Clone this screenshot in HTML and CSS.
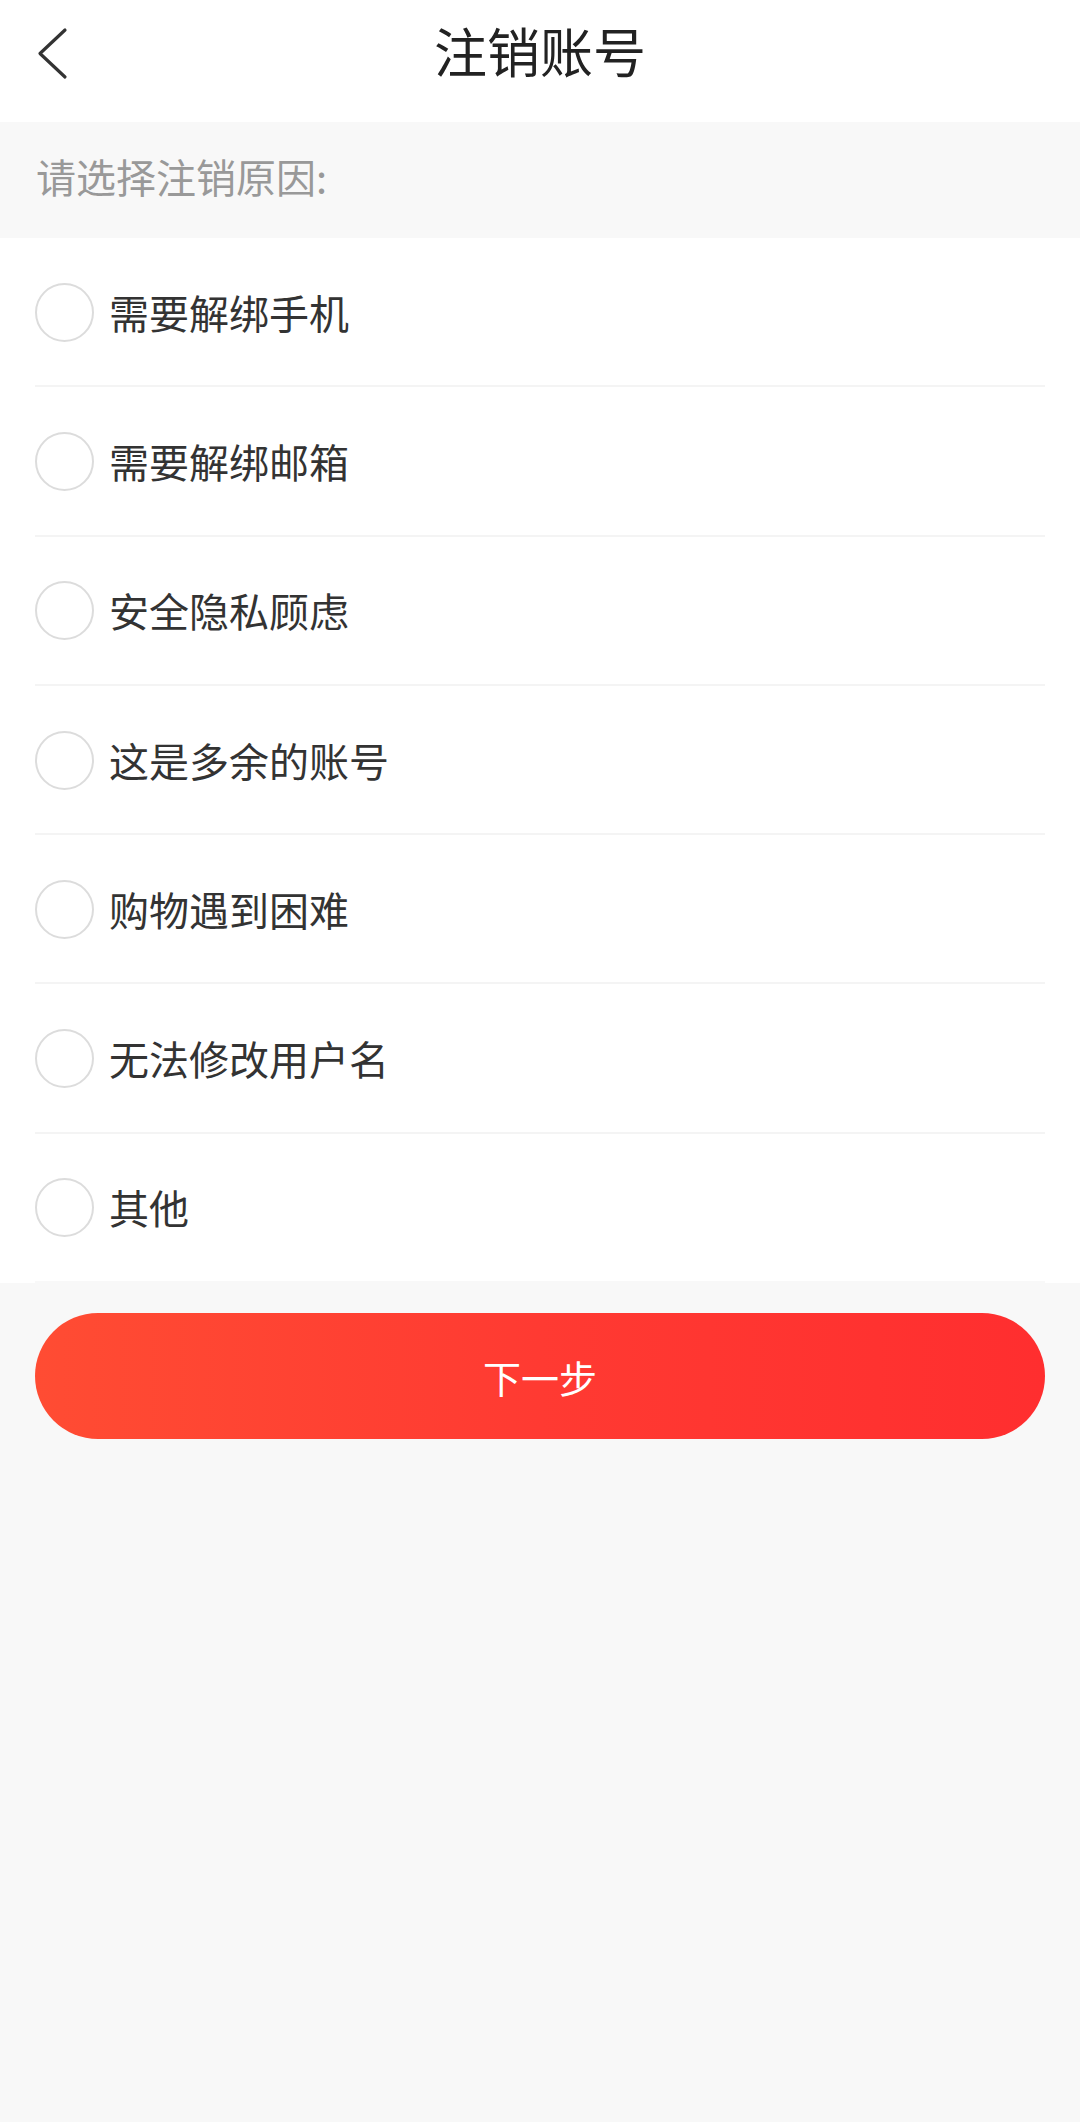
FILE: index.html
```html
<!DOCTYPE html>
<html lang="zh-CN">
<head>
<meta charset="utf-8">
<title>注销账号</title>
<link rel="stylesheet" href="styles.css">
</head>
<body>
<div class="page">
  <header class="topbar">
    <svg class="back" width="40" height="60" viewBox="0 0 40 60">
      <polyline points="30,6 5,29.5 30,53" fill="none" stroke="#333" stroke-width="3.2" stroke-linecap="round" stroke-linejoin="round"/>
    </svg>
    <h1 class="title">注销账号</h1>
  </header>
  <div class="section-label">请选择注销原因:</div>
  <ul class="reasons">
    <li class="reason"><span class="radio"></span><span class="reason-text">需要解绑手机</span></li>
    <li class="reason"><span class="radio"></span><span class="reason-text">需要解绑邮箱</span></li>
    <li class="reason"><span class="radio"></span><span class="reason-text">安全隐私顾虑</span></li>
    <li class="reason"><span class="radio"></span><span class="reason-text">这是多余的账号</span></li>
    <li class="reason"><span class="radio"></span><span class="reason-text">购物遇到困难</span></li>
    <li class="reason"><span class="radio"></span><span class="reason-text">无法修改用户名</span></li>
    <li class="reason"><span class="radio"></span><span class="reason-text">其他</span></li>
  </ul>
  <div class="actions">
    <button class="next-btn">下一步</button>
  </div>
</div>
</body>
</html>
```
FILE: styles.css
```css
* { box-sizing: border-box; }
html, body {
  margin: 0;
  padding: 0;
}
body {
  background: #f8f8f8;
  font-family: "Noto Sans CJK SC", "Noto Sans", sans-serif;
  color: #333;
  width: 1080px;
  min-height: 2122px;
}
.page {
  display: flex;
  flex-direction: column;
}
.topbar {
  position: relative;
  height: 122px;
  background: #fff;
  display: flex;
  align-items: center;
  justify-content: center;
}
.back {
  position: absolute;
  left: 35px;
  top: 24px;
}
.title {
  margin: 0;
  font-size: 53px;
  font-weight: 400;
  color: #222;
  line-height: 1;
  transform: translateY(-11px);
}
.section-label {
  height: 116px;
  display: flex;
  align-items: center;
  padding-left: 36px;
  padding-bottom: 8px;
  font-size: 40px;
  line-height: 1;
  color: #999;
}
.reasons {
  list-style: none;
  margin: 0;
  padding: 0 35px;
  background: #fff;
}
.reason {
  height: 149.3px;
  display: flex;
  align-items: center;
  border-bottom: 2px solid #f4f4f4;
}
.reason:last-child {
  border-bottom-color: #f8f8f8;
}
.radio {
  width: 59px;
  height: 59px;
  border-radius: 50%;
  border: 2.5px solid #dcdcdc;
  flex: none;
  margin-top: 1px;
}
.reason-text {
  margin-left: 15px;
  font-size: 40px;
  line-height: 1;
  color: #333;
}
.actions {
  padding: 30px 35px 0;
}
.next-btn {
  width: 100%;
  height: 126px;
  border: none;
  border-radius: 63px;
  background: linear-gradient(90deg, #ff4c33 0%, #ff3a32 50%, #ff2e2f 100%);
  color: #fff;
  font-family: "Noto Sans CJK SC", "Noto Sans", sans-serif;
  font-size: 38px;
  display: block;
}
```
